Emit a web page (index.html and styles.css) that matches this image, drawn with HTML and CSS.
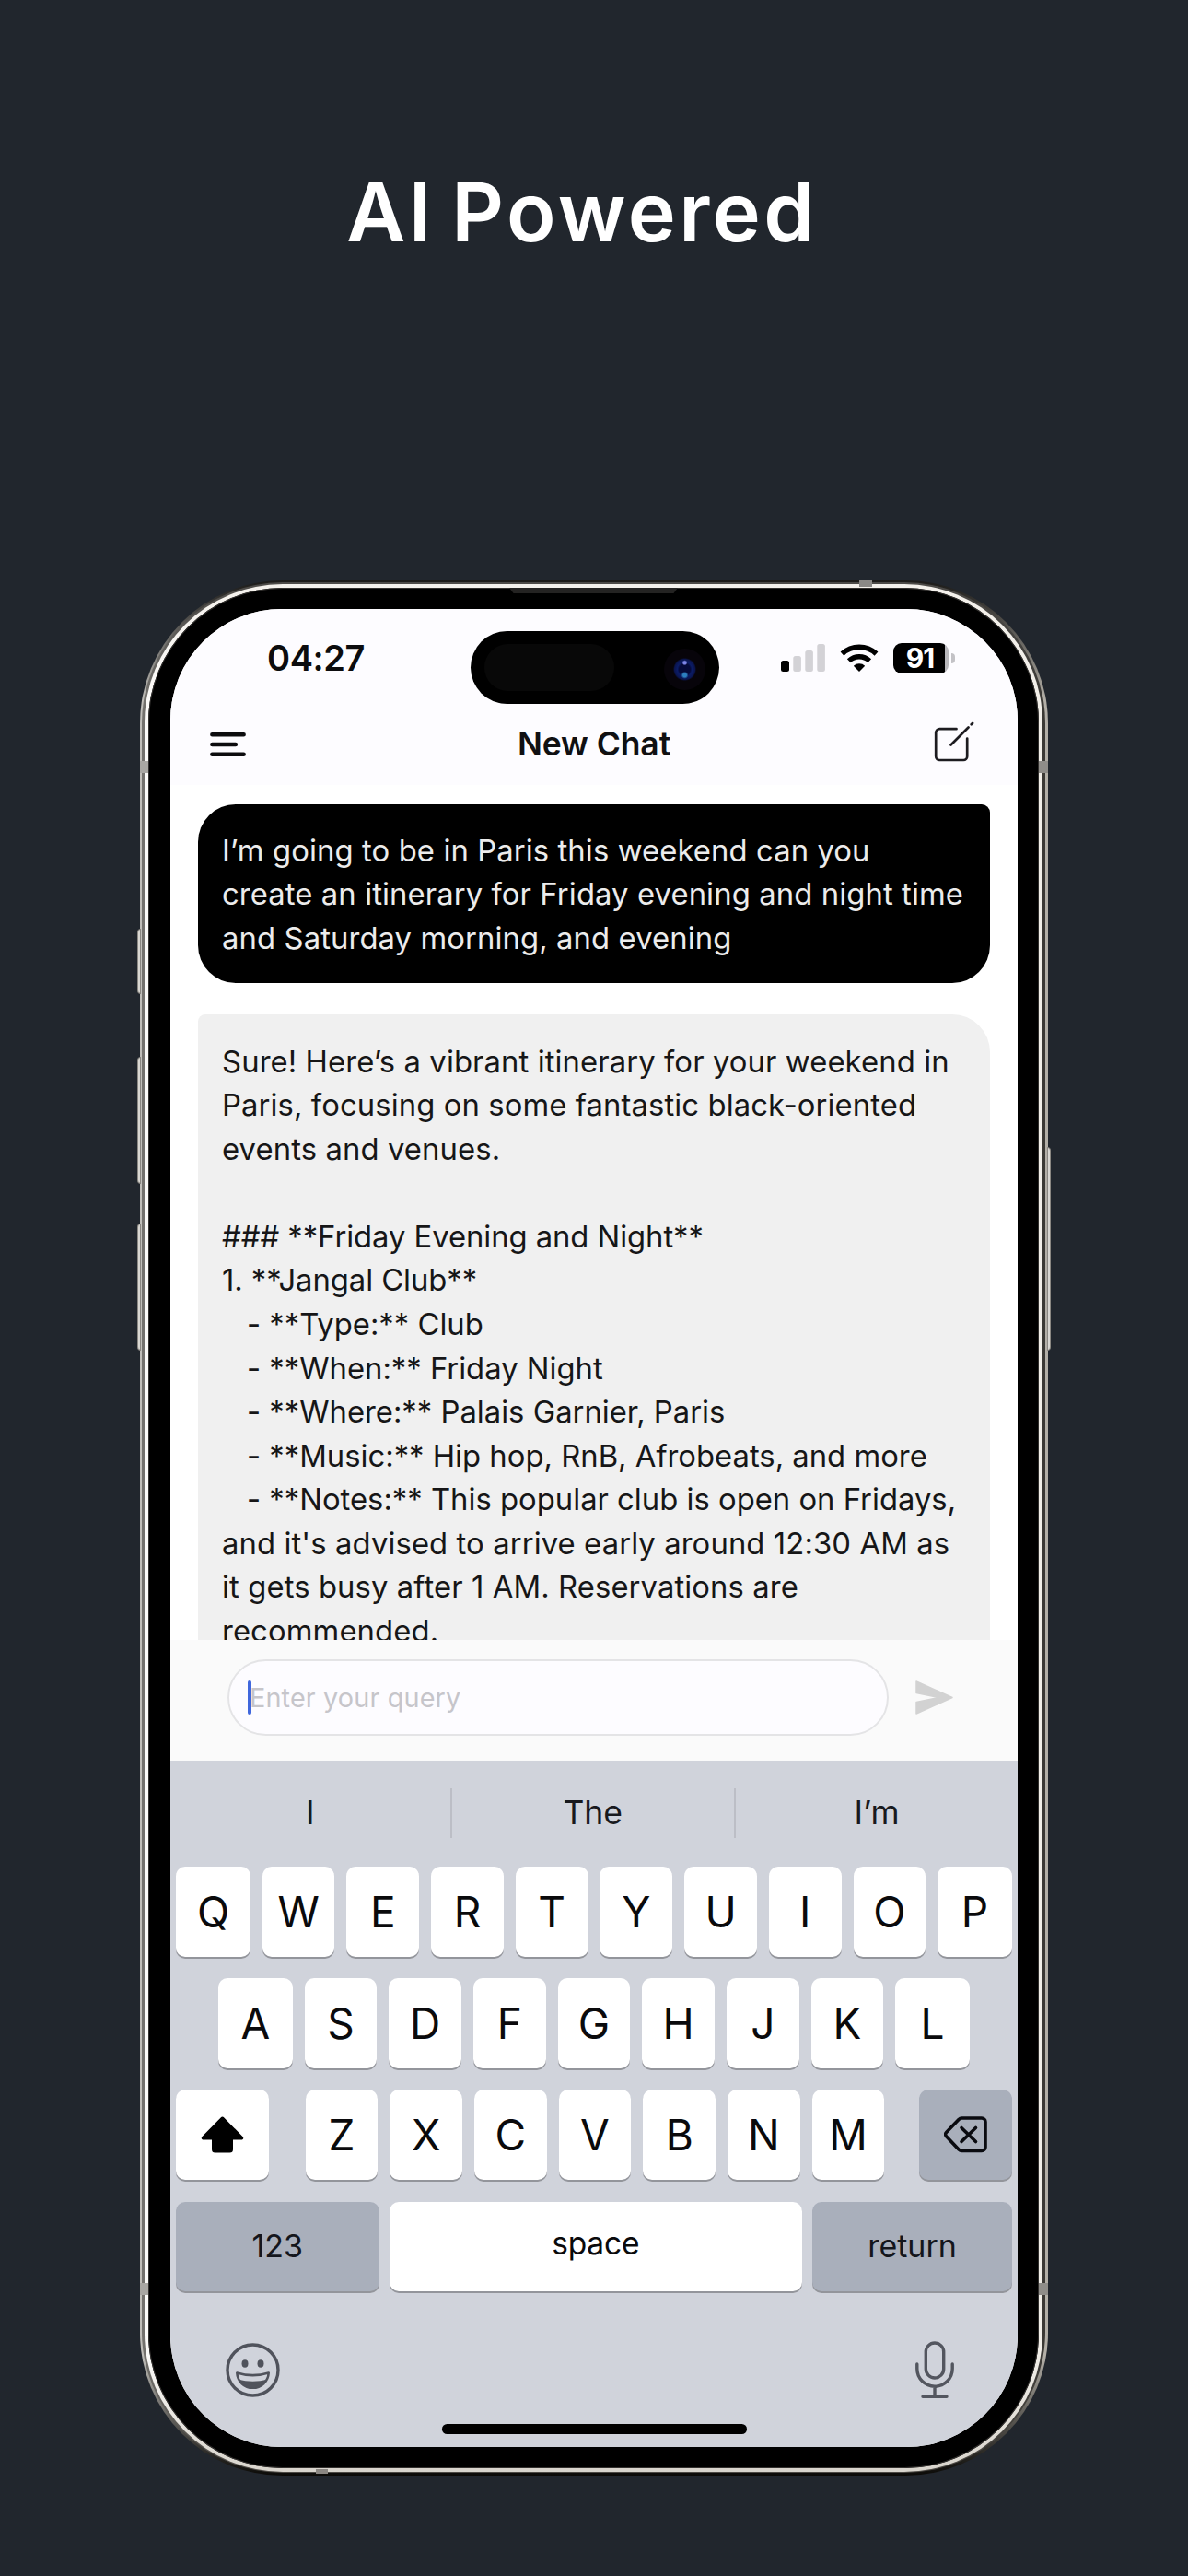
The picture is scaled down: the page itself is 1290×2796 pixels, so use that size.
FILE: index.html
```html
<!DOCTYPE html>
<html lang="en">
<head>
<meta charset="utf-8">
<title>AI Powered</title>
<link rel="stylesheet" href="styles.css">
</head>
<body>
<main class="page">
  <h1 class="headline">AI Powered</h1>
  <div class="phone">
    <i class="side side-mute"></i><i class="side side-up"></i><i class="side side-down"></i><i class="side side-power"></i>
    <div class="rim rim-outer"><div class="rim rim-groove"><div class="rim rim-shine"><div class="bezel">
      <i class="earpiece"></i>
      <div class="screen">
        <div class="island"><i class="sensor"></i><i class="camera"></i></div>
        <header class="status">
          <span class="time">04:27</span>
          <div class="indicators">
            <svg class="signal" width="48" height="30" viewBox="0 0 48 30"><rect x="0" y="18" width="9" height="12" rx="2.5" fill="#000"/><g fill="#d3d2d6"><rect x="13.3" y="13" width="8.6" height="17" rx="2.5"/><rect x="26.3" y="7" width="8.6" height="23" rx="2.5"/><rect x="39.3" y="0" width="8.6" height="30" rx="2.5"/></g></svg>
            <svg class="wifi" width="42" height="30" viewBox="0 0 42 30"><path d="M21 30l-6.2-6.2a9 9 0 0 1 12.4 0z"/><path d="M2.5 10.6a27 27 0 0 1 37 0M9.8 18.2a16.5 16.5 0 0 1 22.4 0" fill="none" stroke="#000" stroke-width="5.6"/></svg>
            <div class="battery"><span class="charge">91</span></div>
          </div>
        </header>
        <nav class="nav">
          <svg class="menu" width="39" height="28" viewBox="0 0 39 28" fill="none" stroke="#0c0c0e" stroke-width="4.6" stroke-linecap="round"><path d="M2.4 3.2h34.2M2.4 14h25.4M2.4 24.8h34.2"/></svg>
          <span class="nav-title">New Chat</span>
          <svg class="compose" width="44" height="44" viewBox="0 0 44 44" fill="none" stroke="#1d1c20" stroke-width="2.7" stroke-linecap="round" stroke-linejoin="round"><path d="M24.5 8.2H6.2a4 4 0 0 0-4 4V38a4 4 0 0 0 4 4h26a4 4 0 0 0 4-4V18.5"/><path d="M18.500 25.500L37.500 6.500M40.700 3.300l1.400-1.400"/></svg>
        </nav>
        <section class="chat">
          <div class="bubble sent">
            <p>I’m going to be in Paris this weekend can you</p>
            <p>create an itinerary for Friday evening and night time</p>
            <p>and Saturday morning, and evening</p>
          </div>
          <div class="bubble received">
            <p>Sure! Here’s a vibrant itinerary for your weekend in</p>
            <p>Paris, focusing on some fantastic black-oriented</p>
            <p>events and venues.</p>
            <p>&nbsp;</p>
            <p class="marked">### **Friday Evening and Night**</p>
            <p class="marked">1. **Jangal Club**</p>
            <p class="item">- **Type:** Club</p>
            <p class="item">- **When:** Friday Night</p>
            <p class="item">- **Where:** Palais Garnier, Paris</p>
            <p class="item">- **Music:** Hip hop, RnB, Afrobeats, and more</p>
            <p class="item">- **Notes:** This popular club is open on Fridays,</p>
            <p>and it's advised to arrive early around 12:30 AM as</p>
            <p>it gets busy after 1 AM. Reservations are</p>
            <p>recommended.</p>
          </div>
        </section>
        <div class="composer">
          <div class="field"><i class="caret"></i><span>Enter your query</span></div>
          <svg class="send" width="41" height="37" viewBox="0 0 41 37" fill="#d2d2d2" stroke="#d2d2d2" stroke-width="1.500" stroke-linejoin="round"><path d="M1 1L40 18.500 1 36V23.500L25 18.500 1 13.500z"/></svg>
        </div>
        <section class="keyboard">
          <div class="suggestions"><span>I</span><span>The</span><span>I’m</span></div>
          <div class="rows">
            <div class="row full"><b>Q</b><b>W</b><b>E</b><b>R</b><b>T</b><b>Y</b><b>U</b><b>I</b><b>O</b><b>P</b></div>
            <div class="row full"><b>A</b><b>S</b><b>D</b><b>F</b><b>G</b><b>H</b><b>J</b><b>K</b><b>L</b></div>
            <div class="row spread">
              <b class="wide"><svg width="47" height="40" viewBox="0 0 47 40"><path d="M21.700 1.500a2.500 2.500 0 0 1 3.600 0L45.500 22c1.500 1.700.6 3.500-1.500 3.500h-9V36a3.500 3.500 0 0 1-3.500 3.500h-16A3.500 3.500 0 0 1 12 36V25.500H3c-2.100 0-3-1.800-1.500-3.500z"/></svg></b>
              <div class="row inner"><b>Z</b><b>X</b><b>C</b><b>V</b><b>B</b><b>N</b><b>M</b></div>
              <b class="wide dark"><svg width="47" height="40" viewBox="0 0 47 40" fill="none" stroke="#0a0b10" stroke-width="3.600" stroke-linejoin="round" stroke-linecap="round"><path d="M19.500 2H41a4 4 0 0 1 4 4v27.500a4 4 0 0 1-4 4H19.500a5 5 0 0 1-3.500-1.500L2.500 21.700a3 3 0 0 1 0-4.200L16 3.500A5 5 0 0 1 19.500 2z"/><path d="M19 12.500L34.500 27.500M34.500 12.500L19 27.500"/></svg></b>
            </div>
            <div class="row spread words"><b class="dark num">123</b><b class="space"><span>space</span></b><b class="dark ret">return</b></div>
          </div>
          <footer class="dock">
            <svg width="59" height="59" viewBox="0 0 59 59"><circle cx="29.500" cy="29.500" r="27.500" fill="none" stroke="#50535c" stroke-width="3.400"/><ellipse cx="21" cy="22.500" rx="3.500" ry="4.200" fill="#50535c"/><ellipse cx="38" cy="22.500" rx="3.500" ry="4.200" fill="#50535c"/><path d="M12.300 32.500c11 3.400 23.400 3.400 34.400 0-.5 9.500-8 16.300-17.200 16.300s-16.700-6.800-17.200-16.300z" fill="none" stroke="#50535c" stroke-width="2.600" stroke-linejoin="round"/><path d="M14 39.500c9.500 3 21.500 3 31 0-2.800 5.800-8.600 9.500-15.500 9.500S16.800 45.300 14 39.500z" fill="#50535c"/></svg>
            <svg width="42" height="63" viewBox="0 0 42 63" fill="none" stroke="#53565f" stroke-width="3.400" stroke-linecap="round"><rect x="11.300" y="2" width="19.400" height="38" rx="9.700"/><path d="M1.800 25v5a19.200 19.200 0 0 0 38.400 0v-5M21 49.500V60M8 60.300h26"/></svg>
          </footer>
        </section>
        <i class="home"></i>
      </div>
    </div></div></div></div>
    <i class="band band-l1"></i><i class="band band-r1"></i><i class="band band-l2"></i><i class="band band-r2"></i><i class="band band-top"></i><i class="band band-bottom"></i>
  </div>
</main>
</body>
</html>
```
FILE: styles.css
```css
* { box-sizing: border-box; margin: 0; padding: 0; }
body { background: #21262d; font-family: Inter, "Liberation Sans", sans-serif; }
.page { width: 1290px; height: 2796px; display: flex; flex-direction: column; align-items: center; overflow: hidden; }
.headline { margin-top: 170px; height: 120px; line-height: 120px; font-size: 88px; font-weight: 600; letter-spacing: 3.500px; word-spacing: -7px; color: #fff; padding-right: 26px; white-space: nowrap; }

/* phone body: nested rims shade from the side colours to the cap colours through the corners */
.phone { position: relative; width: 986px; height: 2057px; margin-top: 340px; flex: none; }
.rim { width: 100%; height: 100%; --cap: 130px; background: linear-gradient(180deg, var(--t) 0, transparent var(--cap), transparent calc(100% - var(--cap)), var(--b) 100%), linear-gradient(90deg, var(--l) 50%, var(--r) 50%); }
.rim-outer { --t: #1b1a18; --b: #0b0a07; --l: #c0beb9; --r: #b3afa7; border-radius: 155px; padding: 2px 3px 3px 2px; }
.rim-groove { --t: #4c4a47; --b: #4c4944; --l: #73716d; --r: #3b3935; border-radius: 153px; padding: 2px 3px 1px 3px; }
.rim-shine { --t: #f4f1ec; --b: #d8d4cc; --l: #fcfbf9; --r: #f1eee8; border-radius: 150px; padding: 4px; }
.bezel { position: relative; height: 100%; border-radius: 146px; background: #000; padding: 23px 23px 23px 24px; box-shadow: inset 0 0 0 1px #33312f; }
.earpiece { position: absolute; left: 392px; top: 0; width: 183px; height: 6px; background: #242322; clip-path: polygon(0 0, 100% 0, 97.500% 100%, 2.500% 100%); }
.side { position: absolute; width: 4px; background: #d9d7d2; border: 1px solid #8a8782; }
.side-mute { left: -3px; top: 378px; height: 71px; border-radius: 4px 0 0 4px; }
.side-up { left: -3px; top: 517px; height: 138px; border-radius: 4px 0 0 4px; }
.side-down { left: -3px; top: 698px; height: 138px; border-radius: 4px 0 0 4px; }
.side-power { right: -3px; top: 615px; height: 221px; border-radius: 0 4px 4px 0; }
.band { position: absolute; background: #a9a7a3; }
.band-l1, .band-l2 { left: 0; width: 9px; height: 13px; }
.band-r1, .band-r2 { right: 0; width: 10px; height: 13px; background: #8f8d89; }
.band-l1, .band-r1 { top: 196px; }
.band-l2, .band-r2 { top: 1848px; }
.band-top { left: 781px; top: 0; width: 14px; height: 7px; background: #8b8986; }
.band-bottom { left: 191px; bottom: 2px; width: 13px; height: 5px; background: #8b8782; }

/* screen */
.screen { position: relative; width: 920px; height: 1995px; border-radius: 121px; overflow: hidden; display: flex; flex-direction: column; background: #fff; }
.island { position: absolute; left: 326px; top: 24px; width: 270px; height: 79px; border-radius: 40px; background: #000; }
.sensor { position: absolute; left: 15px; top: 14px; width: 141px; height: 51px; border-radius: 26px; background: #080808; }
.camera { position: absolute; left: 210px; top: 19px; width: 45px; height: 45px; border-radius: 50%; background: radial-gradient(circle at 50% 34%, #7e86e8 0 1.500px, transparent 3px), radial-gradient(circle at 50% 64%, #2c7fc0 0 2px, transparent 4px), radial-gradient(circle, #050a3a 0 6px, #0b1c66 8px, #0a1550 11px, #07040a 12.500px); }
.status { height: 106px; flex: none; display: flex; justify-content: space-between; align-items: center; padding: 0 75px 0 105px; background: #fdfcff; }
.time { font-size: 38px; font-weight: 600; letter-spacing: -.4px; color: #0c0c0e; }
.indicators { display: flex; align-items: center; gap: 16px; }
.wifi { margin-top: -1px; }
.battery { position: relative; width: 60px; height: 33px; border-radius: 9px; background: linear-gradient(90deg, #000 0 56px, #b9b8bc 56px); color: #fff; display: flex; justify-content: center; align-items: center; }
.battery::after { content: ""; position: absolute; left: 63px; top: 11px; width: 4px; height: 11px; border-radius: 0 4px 4px 0; background: #c3c2c6; }
.charge { font-size: 30px; font-weight: 700; letter-spacing: -1px; line-height: 33px; padding-right: 2px; }
.nav { height: 85px; flex: none; display: grid; grid-template-columns: 1fr auto 1fr; align-items: center; padding: 0 47px 4px 47px; background: #fdfcff; }
.menu { margin-left: -4px; }
.nav-title { font-size: 35.500px; font-weight: 600; letter-spacing: -.1px; color: #101012; white-space: nowrap; }
.compose { justify-self: end; margin-top: -5px; }
.chat { height: 928px; flex: none; padding: 20.500px 30px 0; overflow: hidden; display: flex; flex-direction: column; gap: 34.500px; }
.bubble { flex: none; padding: 27px 26px 24.500px; font-size: 32.800px; line-height: 47.530px; letter-spacing: .1px; white-space: nowrap; }
.sent { background: #000; color: #ececec; border-radius: 41px 9px 41px 41px; }
.received { padding-top: 27.700px; background: #f0f0f0; color: #161617; border-radius: 8px 41px 41px 41px; }
.marked { letter-spacing: -.06px; }
.item { padding-left: 27px; letter-spacing: 0; }
.composer { height: 131px; flex: none; display: flex; align-items: center; gap: 29px; padding: 0 0 6px 62px; background: #fafafa; }
.field { width: 718px; height: 83px; border: 2px solid #e4e4e6; border-radius: 42px; background: #fdfcff; display: flex; align-items: center; padding-left: 20px; font-size: 28.800px; letter-spacing: .15px; color: #c6c5ca; white-space: nowrap; }
.caret { width: 4px; height: 37px; border-radius: 2px; background: #4067dd; margin-right: -2px; }

/* keyboard */
.keyboard { height: 745px; flex: none; background: #d0d3db; display: flex; flex-direction: column; }
.suggestions { height: 113px; flex: none; display: grid; grid-template-columns: 303.500px 308.500px 308px; align-items: center; font-size: 35.500px; color: #18191d; }
.suggestions span { text-align: center; line-height: 54px; }
.suggestions span + span { border-left: 2px solid #bcbec6; }
.rows { padding: 2px 6px 0; display: flex; flex-direction: column; gap: 23.700px; }
.row { display: flex; justify-content: center; gap: 12.900px; }
.spread { justify-content: space-between; gap: 0; }
.row b { width: 78.800px; height: 97.500px; display: flex; align-items: center; justify-content: center; border-radius: 10px; background: #fff; box-shadow: 0 2px 0 #93959b; font-size: 46px; font-weight: 400; color: #0a0a0c; }
.full b:first-child, .full b:last-child { width: 80.500px; }
.inner { margin-left: 2px; }
.row .wide { width: 101px; }
.row .dark { background: #a9afbb; color: #14161c; }
.words b { font-size: 34px; }
.words .num { width: 220.500px; padding-bottom: 1px; }
.words .space { width: 448px; font-size: 33.500px; }
.space span { margin-top: -6px; letter-spacing: -.2px; }
.words .ret { width: 217px; padding-bottom: 1px; }
.dock { flex: 1; display: flex; justify-content: space-between; align-items: center; padding: 1px 69px 0 60px; }
.home { position: absolute; left: 295px; bottom: 14px; width: 331px; height: 11px; border-radius: 6px; background: #000; }
```
